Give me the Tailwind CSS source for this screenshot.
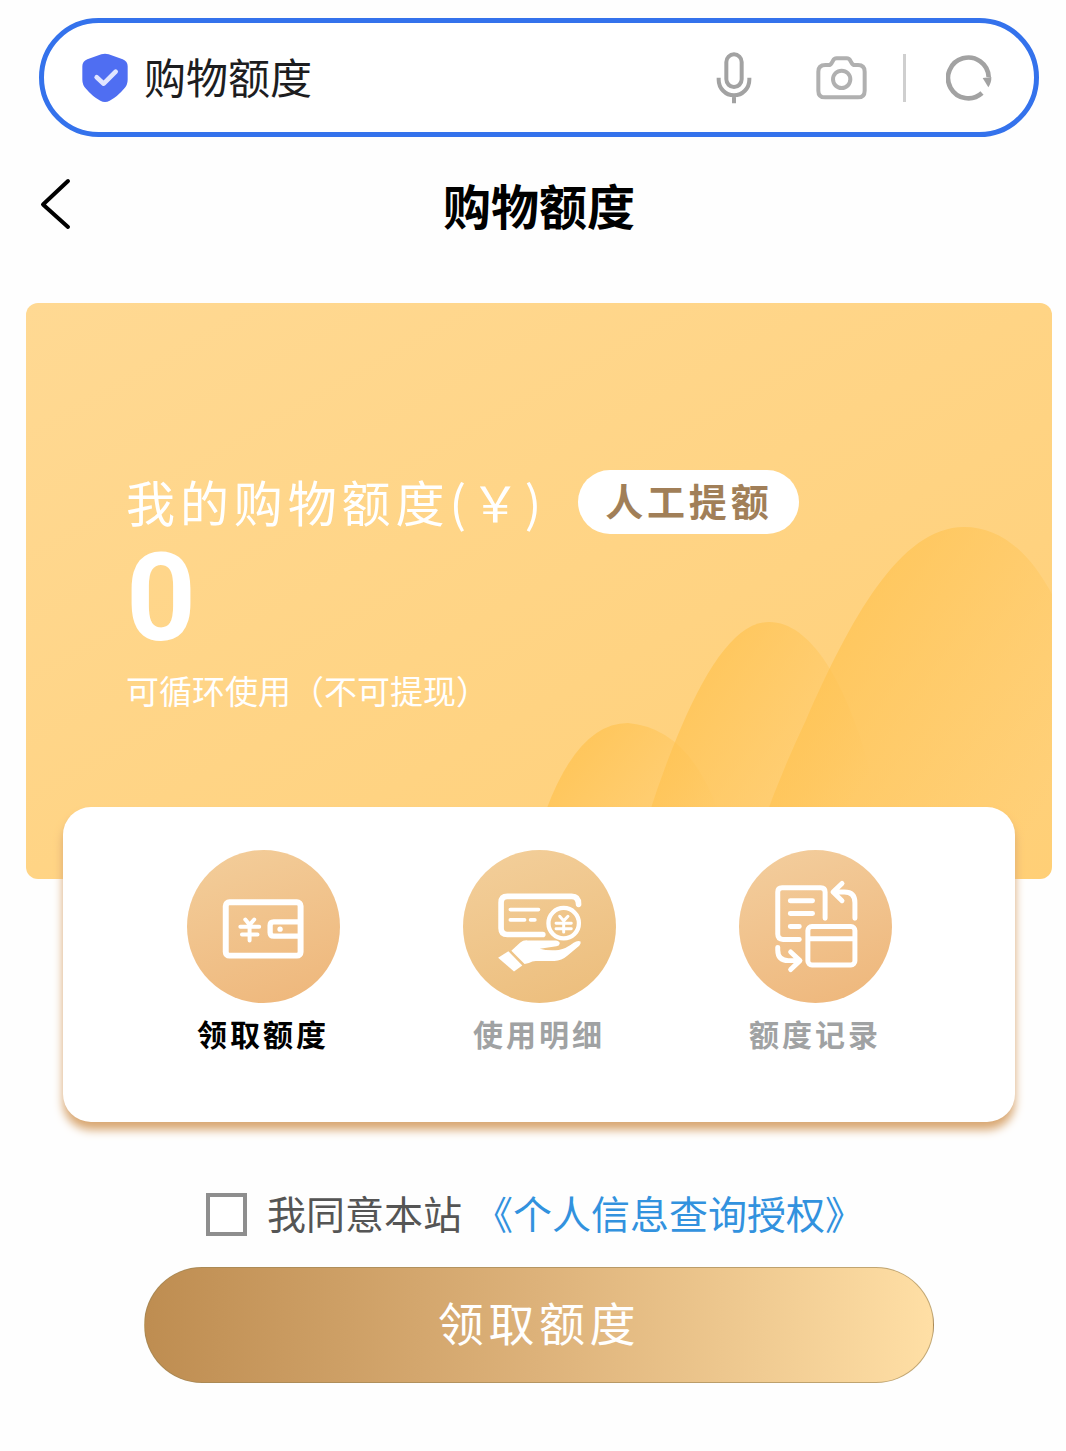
<!DOCTYPE html>
<html lang="zh-CN">
<head>
  <meta charset="UTF-8">
  <meta name="viewport" content="width=device-width, initial-scale=1.0">
  <title>购物额度</title>
  <script src="https://cdn.jsdelivr.net/npm/@tailwindcss/browser@4"></script>
</head>
<body class="bg-[#fefefe] pl-[26px] pr-[14px] pt-[18px] pb-16 font-['Noto_Sans_CJK_SC',sans-serif] text-black">

  <!-- Browser address bar -->
  <div class="mx-[13px] flex h-[119px] items-center rounded-full border-5 border-[#3472ec] bg-white pl-[38px] pr-[42px]">
    <svg class="h-[50px] w-[46px] shrink-0" viewBox="0 0 138 150" aria-hidden="true">
      <path d="M58 4Q69 0 80 4L122 19Q137 25 137 40V80Q137 96 126 107Q107 130 83 143Q69 151 55 143Q31 130 12 107Q1 96 1 80V40Q1 25 16 19Z" fill="#4f6ef2"/>
      <path d="M44 73L65 92L101 56" fill="none" stroke="#e0e5ff" stroke-width="14" stroke-linecap="round" stroke-linejoin="round"/>
    </svg>
    <input type="text" aria-label="搜索" value="购物额度" class="ml-4 h-16 min-w-0 flex-1 bg-transparent pb-1 text-[42px] text-[#1d1d1f] outline-none">
    <button type="button" aria-label="语音" class="shrink-0">
      <svg class="h-[54px] w-[36px]" viewBox="0 0 108 162" fill="none" stroke="#a2a2a2" stroke-width="12">
        <rect x="31" y="10" width="46" height="98" rx="23"/>
        <path d="M8 80V86A46 47 0 0 0 100 86V80M54 133V157"/>
      </svg>
    </button>
    <button type="button" aria-label="拍照" class="ml-16 shrink-0">
      <svg class="h-[44px] w-[51px]" viewBox="0 0 153 132" fill="none" stroke="#b0b0b0" stroke-width="12" stroke-linejoin="round">
        <path d="M28 27H38Q44 27 47 21L51 14Q54 7 62 7H92Q100 7 103 14L107 21Q110 27 116 27H126Q146 27 146 47V104Q146 124 126 124H27Q7 124 7 104V47Q7 27 28 27Z"/>
        <circle cx="77" cy="70" r="26"/>
      </svg>
    </button>
    <span class="ml-9 h-12 w-[3px] bg-[#cfcfcf]"></span>
    <button type="button" aria-label="刷新" class="ml-10 shrink-0">
      <svg class="h-[46px] w-[46px]" viewBox="0 0 138 138">
        <path d="M108 114A61 61 0 1 1 128 66" fill="none" stroke="#a2a2a2" stroke-width="14"/>
        <path d="M110 69L136 66Q137 82 127 97Z" fill="#a2a2a2"/>
      </svg>
    </button>
  </div>

  <!-- Page header -->
  <header class="grid h-[134px] grid-cols-[1fr_auto_1fr] items-center">
    <a href="#" aria-label="返回" class="ml-[14px] w-8">
      <svg class="h-[54px] w-8" viewBox="0 0 32 54" fill="none" stroke="#000" stroke-width="4" stroke-linecap="round" stroke-linejoin="round">
        <path d="M28 4L3 27.500L28 50"/>
      </svg>
    </a>
    <h1 class="text-5xl font-bold">购物额度</h1>
  </header>

  <main>
    <!-- Quota card -->
    <section class="relative mt-8 min-h-[576px] overflow-hidden rounded-xl bg-linear-to-br from-[#ffd993] to-[#ffcf76] pl-[100px] pt-[167px] text-white">
      <svg class="absolute bottom-0 right-0 h-[576px] w-[1026px]" viewBox="26 303 1026 576" aria-hidden="true">
        <defs>
          <linearGradient id="hill" x1="0" y1="0.200" x2="1" y2="0.800">
            <stop offset="0.200" stop-color="#ffc24f" stop-opacity="0.700"/>
            <stop offset="0.850" stop-color="#ffc24f" stop-opacity="0"/>
          </linearGradient>
        </defs>
        <path d="M526 879Q562 723 628 723Q710 730 735 879Z" fill="url(#hill)"/>
        <path d="M630 879Q651 800 677 737C705 670 735 622 769 622C830 622 875 750 890 879Z" fill="url(#hill)"/>
        <path d="M745 879Q768 800 806 720C850 620 900 527 964 527C1060 527 1100 700 1120 879Z" fill="url(#hill)"/>
      </svg>
      <div class="relative">
        <div class="flex h-16 items-center">
          <h2 class="pb-1 text-[49px] leading-none tracking-widest">我的购物额度(￥)</h2>
          <button type="button" class="ml-8 h-16 rounded-full bg-white px-[27px] pb-1 text-[38px] font-bold leading-none tracking-widest text-[#a17f58]">人工提额</button>
        </div>
        <p class="mt-1 font-['Roboto',sans-serif] text-[122px] font-bold leading-none">0</p>
        <p class="mt-[6px] text-[33px] leading-[48px]">可循环使用（不可提现）</p>
      </div>
    </section>

    <!-- Shortcuts -->
    <nav class="relative mx-[37px] -mt-[72px] grid h-[315px] grid-cols-3 rounded-[28px] bg-white px-[62px] pt-[43px] shadow-[0_8px_10px_#d9a873]">
      <a href="#" class="flex flex-col items-center">
        <svg class="size-[153px] rounded-full bg-linear-160 from-[#f3ce9b] to-[#eeb67a]" viewBox="48 57 462 462" fill="none" stroke="#fff" stroke-linecap="round" stroke-linejoin="round" aria-hidden="true">
          <rect x="165" y="215" width="226" height="161" rx="11" stroke-width="18"/>
          <path d="M385 274H310Q299 274 299 285V306Q299 317 310 317H385" stroke-width="16"/>
          <circle cx="329" cy="296" r="8" fill="#fff" stroke="none"/>
          <path d="M224 267L237 283L251 267M237 283V330M209 289H266M214 312H261" stroke-width="12"/>
        </svg>
        <span class="mt-[10px] text-3xl font-bold leading-10 tracking-widest">领取额度</span>
      </a>
      <a href="#" class="flex flex-col items-center">
        <svg class="size-[153px] rounded-full bg-linear-160 from-[#f3cf9b] to-[#ecbd7b]" viewBox="65 57 462 462" fill="none" stroke="#fff" stroke-linecap="round" stroke-linejoin="round" aria-hidden="true">
          <path d="M306 312H199Q180 312 180 293V216Q180 197 199 197H393Q414 197 414 221" stroke-width="17"/>
          <path d="M208 237H293M208 268H251M269 268H282" stroke-width="11"/>
          <circle cx="369" cy="278" r="46" stroke-width="13"/>
          <path d="M357 257L369 271L382 257M369 271V305M346 278H392M346 295H392" stroke-width="9"/>
          <path d="M211 361L238 336Q247 329 260 330H346Q358 332 357 340Q356 346 347 348L297 355Q320 362 354 359Q376 355 399 337Q410 330 420 333Q422 338 416 346L380 376Q363 391 341 392H285Q274 392 264 398L251 401Z" fill="#fff" stroke="none"/>
          <path d="M171 382L202 363L244 406L219 424Z" fill="#fff" stroke="none"/>
        </svg>
        <span class="mt-[10px] text-3xl font-bold leading-10 tracking-widest text-[#a0a2a3]">使用明细</span>
      </a>
      <a href="#" class="flex flex-col items-center">
        <svg class="size-[153px] rounded-full bg-linear-160 from-[#f3ce9e] to-[#eeb67a]" viewBox="53 57 462 462" fill="none" stroke="#fff" stroke-width="15" stroke-linecap="round" stroke-linejoin="round" aria-hidden="true">
          <path d="M235 327H186Q170 327 170 311V184Q170 171 183 171H300Q313 171 313 184V263"/>
          <path d="M208 210H275M208 249H275M208 288H235"/>
          <rect x="261" y="288" width="142" height="116" rx="12"/>
          <path d="M263 325H402" stroke-linecap="butt"/>
          <path d="M403 263V216Q403 184 371 184H338M364 158L337 184L364 210"/>
          <path d="M170 351V359Q170 391 202 391H236M209 365L237 391L209 418"/>
        </svg>
        <span class="mt-[10px] text-3xl font-bold leading-10 tracking-widest text-[#a0a2a3]">额度记录</span>
      </a>
    </nav>

    <form class="mt-16">
      <div class="mx-auto flex h-14 w-fit items-center pr-2 text-[39px] leading-none text-[#555]">
        <input id="agree" type="checkbox" class="h-[43px] w-[41px] shrink-0 appearance-none border-4 border-[#8e8e8e] bg-white checked:bg-[#c6965a]">
        <label for="agree" class="ml-5 pb-1">我同意本站</label>
        <a href="#" class="ml-3 pb-1 text-[#3292de]">《个人信息查询授权》</a>
      </div>
      <button type="button" class="mx-auto mt-[25px] block h-[116px] w-10/13 rounded-full border border-[#9b8354]/60 bg-linear-to-r from-[#be8d51] via-[#ddb27a] to-[#ffdfa5] pb-2 text-[46px] tracking-widest text-white">领取额度</button>
    </form>
  </main>
</body>
</html>
